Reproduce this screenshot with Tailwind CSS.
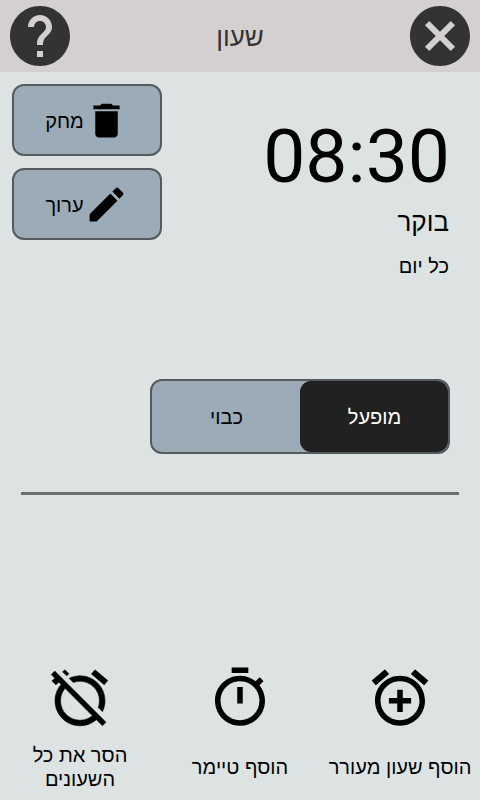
<!DOCTYPE html>
<html lang="he" dir="rtl">
<head>
<meta charset="utf-8">
<title>שעון</title>
<script src="https://cdn.jsdelivr.net/npm/@tailwindcss/browser@4"></script>
</head>
<body class="h-[800px] w-[480px] overflow-hidden bg-[#dde3e3] font-['Liberation_Sans',Arial,sans-serif] text-[20px] leading-6 text-black">
<div class="flex h-full flex-col">
  <header class="flex h-[72px] shrink-0 items-center justify-between bg-[#d4d0cf] px-1 text-[#333333]">
    <button aria-label="סגור"><svg class="block size-[72px]" viewBox="0 0 24 24" fill="currentColor"><path d="M12 2C6.47 2 2 6.47 2 12s4.47 10 10 10 10-4.47 10-10S17.53 2 12 2zm5 13.59L15.59 17 12 13.41 8.41 17 7 15.59 10.59 12 7 8.41 8.41 7 12 10.59 15.59 7 17 8.41 13.41 12 17 15.59z"/></svg></button>
    <h1 class="pt-0.5 text-[26px] leading-8">שעון</h1>
    <button aria-label="עזרה"><svg class="block size-[72px]" viewBox="0 0 24 24" fill="currentColor"><path d="M12 2C6.48 2 2 6.48 2 12s4.48 10 10 10 10-4.48 10-10S17.52 2 12 2zm1 17h-2v-2h2v2zm2.07-7.75l-.9.92C13.45 12.9 13 13.5 13 15h-2v-.5c0-1.1.45-2.1 1.17-2.83l1.24-1.26c.37-.36.59-.86.59-1.41 0-1.1-.9-2-2-2s-2 .9-2 2H8c0-2.21 1.79-4 4-4s4 1.79 4 4c0 .88-.36 1.68-.93 2.25z"/></svg></button>
  </header>

  <main class="flex h-[423px] shrink-0 flex-col">
    <section class="flex h-[307px] justify-between pt-3 pr-[30px] pl-3">
      <div class="pt-[28px]">
        <div dir="ltr" class="h-[88px] text-right font-[Roboto,sans-serif] text-[75px] leading-[88px]">08:30</div>
        <div class="h-[44px] pr-px text-[26px] leading-[44px]">בוקר</div>
        <div class="h-[44px] pr-px leading-[44px]">כל יום</div>
      </div>
      <div class="flex flex-col gap-3">
        <button class="flex h-[72px] w-[150px] items-center justify-center rounded-xl border-2 border-[#555a5e] bg-[#9bacb8]">
          <svg class="size-[45px]" viewBox="0 0 24 24"><path d="M6 19c0 1.1.9 2 2 2h8c1.1 0 2-.9 2-2V7H6v12zM19 4h-3.5l-1-1h-5l-1 1H5v2h14V4z"/></svg>
          <span class="pt-0.5">מחק</span>
        </button>
        <button class="flex h-[72px] w-[150px] items-center justify-center rounded-xl border-2 border-[#555a5e] bg-[#9bacb8]">
          <svg class="size-[45px]" viewBox="0 0 24 24"><path d="M3 17.25V21h3.75L17.81 9.94l-3.75-3.75L3 17.25zM20.71 7.04c.39-.39.39-1.02 0-1.41l-2.34-2.34c-.39-.39-1.02-.39-1.41 0l-1.83 1.83 3.75 3.75 1.83-1.83z"/></svg>
          <span class="pt-0.5">ערוך</span>
        </button>
      </div>
    </section>
    <div class="mr-[30px] flex h-[75px] w-[300px] rounded-xl border-2 border-[#555a5e] bg-[#9bacb8]">
      <button class="flex-1 rounded-[11px] bg-[#212121] pl-px text-white">מופעל</button>
      <button class="flex-1 pl-px">כבוי</button>
    </div>
    <hr class="mx-[21px] mt-[38px] h-[3px] border-0 bg-[#6e6e70]">
  </main>

  <footer class="mt-auto grid h-[136px] grid-cols-3">
    <button class="flex flex-col items-center">
      <svg class="size-[68px] shrink-0" viewBox="-.24 -.24 24.48 24.48"><path stroke="#000" stroke-width=".35" d="M7.88 3.39L6.6 1.86 2 5.71l1.29 1.53 4.59-3.85zM22 5.72l-4.6-3.86-1.29 1.53 4.6 3.86L22 5.72z"/><path d="M12 4c-4.97 0-9 4.03-9 9s4.02 9 9 9c4.97 0 9-4.03 9-9s-4.03-9-9-9zm0 16c-3.87 0-7-3.13-7-7s3.13-7 7-7 7 3.13 7 7-3.13 7-7 7zm1-11h-2v3H8v2h3v3h2v-3h3v-2h-3V9z"/></svg>
      <span class="flex flex-1 items-center pt-0.5 whitespace-nowrap">הוסף שעון מעורר</span>
    </button>
    <button class="flex flex-col items-center">
      <svg class="size-[68px] shrink-0" viewBox="-.24 -.24 24.48 24.48"><path d="M15 1H9v2h6V1zm-4 13h2V8h-2v6zm8.03-6.61l1.42-1.42c-.43-.51-.9-.99-1.41-1.41l-1.42 1.42C16.07 4.74 14.12 4 12 4c-4.97 0-9 4.03-9 9s4.02 9 9 9 9-4.03 9-9c0-2.12-.74-4.07-1.97-5.61zM12 20c-3.87 0-7-3.13-7-7s3.13-7 7-7 7 3.13 7 7-3.13 7-7 7z"/></svg>
      <span class="flex flex-1 items-center pt-0.5">הוסף טיימר</span>
    </button>
    <button class="flex flex-col items-center">
      <svg class="size-[68px] shrink-0" viewBox="-.24 -.24 24.48 24.48"><path stroke="#000" stroke-width=".2" d="M12 6c3.87 0 7 3.13 7 7 0 .84-.16 1.65-.43 2.4l1.52 1.52c.58-1.19.91-2.51.91-3.92 0-4.97-4.03-9-9-9-1.41 0-2.73.33-3.92.91L9.6 6.43C10.35 6.16 11.16 6 12 6zm10-.28l-4.6-3.86-1.29 1.53 4.6 3.86L22 5.72zM2.92 2.29L1.65 3.57 2.98 4.9l-1.11.93 1.42 1.42 1.11-.94.8.8C3.83 8.69 3 10.75 3 13c0 4.97 4.02 9 9 9 2.25 0 4.31-.83 5.89-2.2l2.2 2.2 1.27-1.27L3.89 3.27l-.97-.98zm13.55 16.1C15.26 19.39 13.7 20 12 20c-3.87 0-7-3.13-7-7 0-1.7.61-3.26 1.61-4.47l9.86 9.86zM8.02 3.28L6.6 1.86l-.86.71 1.42 1.42.86-.71z"/></svg>
      <span class="flex flex-1 flex-col items-center justify-center pt-0.5"><span>הסר את כל</span><span>השעונים</span></span>
    </button>
  </footer>
</div>
</body>
</html>
